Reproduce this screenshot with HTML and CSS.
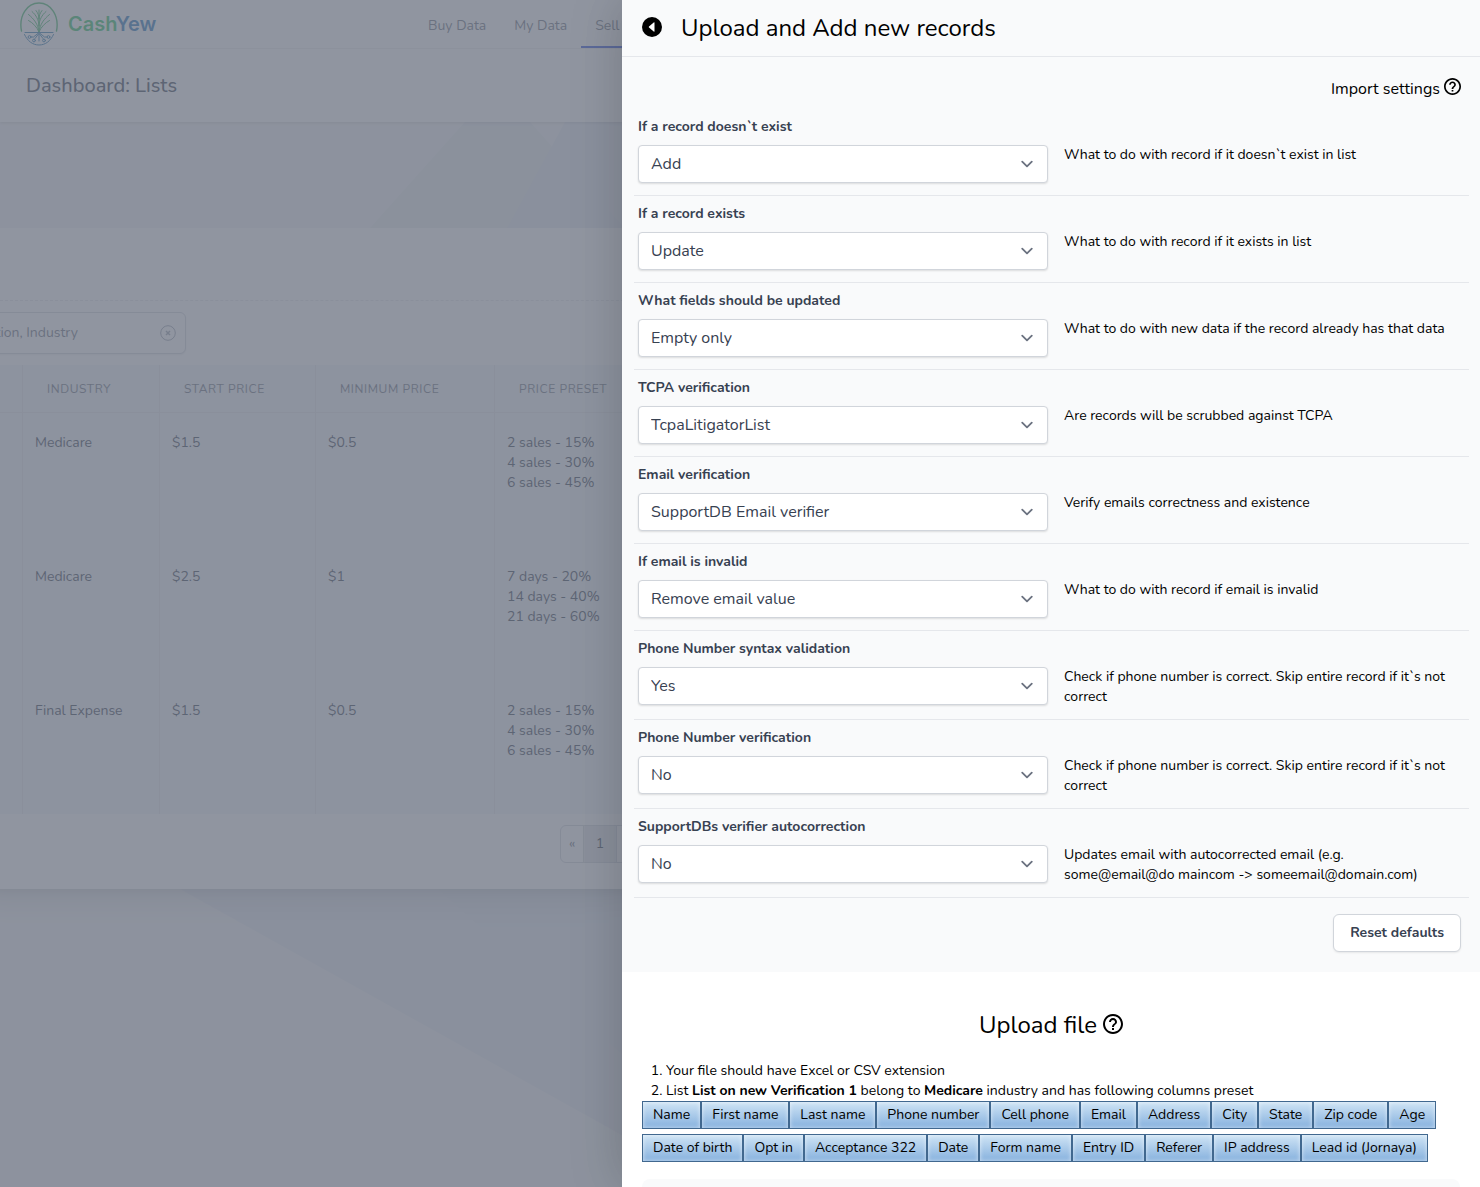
FILE: index.html
```html
<!DOCTYPE html>
<html lang="en">
<head>
<meta charset="utf-8">
<meta name="viewport" content="width=device-width, initial-scale=1">
<title>CashYew - Lists</title>
<link rel="stylesheet" href="styles.css">
</head>
<body>
<div class="page">
  <svg class="page-art" viewBox="0 0 1480 1187" preserveAspectRatio="xMinYMin slice" aria-hidden="true">
    <polygon fill="#e7edee" points="465,122 530,122 1480,1187 770,1187 72,561"/>
    <polygon fill="#e0e5f1" fill-opacity=".8" points="565,122 1480,122 1480,1187 715,1187 155,875"/>
  </svg>
  <header class="topbar">
    <a class="brand" href="#">
      <svg class="brand-mark" width="38" height="44" viewBox="0 0 38 44" fill="none" aria-hidden="true">
        <g stroke="#3fb765" stroke-linecap="round">
          <path stroke-width="1.400" d="M1.500 29C-1.500 14 7 1 19 1s20.500 13 17.500 28"/>
          <path d="M19 30V8M19 30C18 22 14 17 8.500 12.500M19 30C20 22 24 17 29.500 12.500M19 30C17 25 13 21 8.500 18.500M19 30C21 25 25 21 29.500 18.500M19 24c0-6-3-11-7-14.500M19 24c0-6 3-11 7-14.500M19 17c0-3-1-6-3-8.500M19 17c0-3 1-6 3-8.500"/>
        </g>
        <g stroke="#2c79ad" stroke-linecap="round">
          <path d="M5 30.500h28M19 31v8M18.500 31l-5 4h-3M19.500 31l5 4h3M18.500 32l-3.500 4.500M19.500 32l3.500 4.500M4.500 32.500c3 6.500 8 10.500 14.500 10.500s11.500-4 14.500-10.500"/>
          <circle cx="9.500" cy="35" r="1.400"/><circle cx="28.500" cy="35" r="1.400"/>
          <circle cx="14" cy="38.500" r="1.400"/><circle cx="24" cy="38.500" r="1.400"/>
        </g>
      </svg>
      <span class="brand-name"><span class="brand-cash">Cash</span><span class="brand-yew">Yew</span></span>
    </a>
    <nav class="nav">
      <a href="#">Buy Data</a>
      <a href="#">My Data</a>
      <a href="#" class="is-active">Sell Data</a>
    </nav>
  </header>
  <div class="heading"><h1>Dashboard: Lists</h1></div>
  <main class="card">
    <div class="card-head"></div>
    <div class="search">
      <input type="text" aria-label="Search" placeholder="Search by Name, Description, Industry">
      <button type="button" aria-label="Clear search">
        <svg width="16" height="16" viewBox="0 0 16 16" fill="none" stroke="currentColor"><circle cx="8" cy="8" r="7.300"/><path stroke-width="1.500" d="m6 6 4 4m0-4-4 4"/></svg>
      </button>
    </div>
    <table class="lists">
      <colgroup><col class="c-name"><col class="c-industry"><col class="c-start"><col class="c-min"><col></colgroup>
      <thead><tr><th></th><th>Industry</th><th>Start price</th><th>Minimum price</th><th>Price preset</th></tr></thead>
      <tbody>
        <tr><td></td><td>Medicare</td><td>$1.5</td><td>$0.5</td><td>2 sales - 15%<br>4 sales - 30%<br>6 sales - 45%</td></tr>
        <tr><td></td><td>Medicare</td><td>$2.5</td><td>$1</td><td>7 days - 20%<br>14 days - 40%<br>21 days - 60%</td></tr>
        <tr><td></td><td>Final Expense</td><td>$1.5</td><td>$0.5</td><td>2 sales - 15%<br>4 sales - 30%<br>6 sales - 45%</td></tr>
      </tbody>
    </table>
    <div class="pager"><button type="button" class="pager-prev">«</button><button type="button" class="is-current">1</button><button type="button">»</button></div>
  </main>
</div>
<div class="backdrop"></div>

<aside class="panel" role="dialog" aria-labelledby="panel-title">
  <header class="panel-head">
    <button type="button" class="back" aria-label="Back">
      <svg width="20" height="20" viewBox="0 0 20 20"><circle cx="10" cy="10" r="10"/><path fill="#fff" d="M12.500 5.800v8.400a.5.5 0 0 1-.8.400L7 10.400a.5.5 0 0 1 0-.8l4.700-4.200a.5.5 0 0 1 .8.400z"/></svg>
    </button>
    <h2 id="panel-title">Upload and Add new records</h2>
  </header>

  <section class="settings">
    <div class="settings-title"><span>Import settings</span>
      <svg class="help" width="17" height="17" viewBox="2 2 20 20"><path d="M11 18h2v-2h-2v2zm1-16C6.480 2 2 6.480 2 12s4.480 10 10 10 10-4.480 10-10S17.520 2 12 2zm0 18c-4.410 0-8-3.590-8-8s3.590-8 8-8 8 3.590 8 8-3.590 8-8 8zm0-14c-2.210 0-4 1.790-4 4h2c0-1.100.9-2 2-2s2 .9 2 2c0 2-3 1.750-3 5h2c0-2.250 3-2.500 3-5 0-2.210-1.790-4-4-4z"/></svg>
    </div>
    <div class="row"><div class="field"><label for="s1">If a record doesn`t exist</label><select id="s1"><option>Add</option></select></div><p>What to do with record if it doesn`t exist in list</p></div>
    <div class="row"><div class="field"><label for="s2">If a record exists</label><select id="s2"><option>Update</option></select></div><p>What to do with record if it exists in list</p></div>
    <div class="row"><div class="field"><label for="s3">What fields should be updated</label><select id="s3"><option>Empty only</option></select></div><p>What to do with new data if the record already has that data</p></div>
    <div class="row"><div class="field"><label for="s4">TCPA verification</label><select id="s4"><option>TcpaLitigatorList</option></select></div><p>Are records will be scrubbed against TCPA</p></div>
    <div class="row"><div class="field"><label for="s5">Email verification</label><select id="s5"><option>SupportDB Email verifier</option></select></div><p>Verify emails correctness and existence</p></div>
    <div class="row"><div class="field"><label for="s6">If email is invalid</label><select id="s6"><option>Remove email value</option></select></div><p>What to do with record if email is invalid</p></div>
    <div class="row"><div class="field"><label for="s7">Phone Number syntax validation</label><select id="s7"><option>Yes</option></select></div><p>Check if phone number is correct. Skip entire record if it`s not correct</p></div>
    <div class="row"><div class="field"><label for="s8">Phone Number verification</label><select id="s8"><option>No</option></select></div><p>Check if phone number is correct. Skip entire record if it`s not correct</p></div>
    <div class="row"><div class="field"><label for="s9">SupportDBs verifier autocorrection</label><select id="s9"><option>No</option></select></div><p>Updates email with autocorrected email (e.g. some@email@do maincom -&gt; someemail@domain.com)</p></div>
    <div class="settings-foot"><button type="button" class="btn">Reset defaults</button></div>
  </section>

  <section class="upload">
    <h2>Upload file
      <svg class="help" width="20" height="20" viewBox="2 2 20 20"><path d="M11 18h2v-2h-2v2zm1-16C6.480 2 2 6.480 2 12s4.480 10 10 10 10-4.480 10-10S17.520 2 12 2zm0 18c-4.410 0-8-3.590-8-8s3.590-8 8-8 8 3.590 8 8-3.590 8-8 8zm0-14c-2.210 0-4 1.790-4 4h2c0-1.100.9-2 2-2s2 .9 2 2c0 2-3 1.750-3 5h2c0-2.250 3-2.500 3-5 0-2.210-1.790-4-4-4z"/></svg>
    </h2>
    <ol>
      <li>Your file should have Excel or CSV extension</li>
      <li>List <b>List on new Verification 1</b> belong to <b>Medicare</b> industry and has following columns preset</li>
    </ol>
    <div class="tags">
      <span>Name</span><span>First name</span><span>Last name</span><span>Phone number</span><span>Cell phone</span><span>Email</span><span>Address</span><span>City</span><span>State</span><span>Zip code</span><span>Age</span><span>Date of birth</span><span>Opt in</span><span>Acceptance 322</span><span>Date</span><span>Form name</span><span>Entry ID</span><span>Referer</span><span>IP address</span><span>Lead id (Jornaya)</span>
    </div>
    <div class="dropzone"></div>
  </section>
</aside>
</body>
</html>
```
FILE: styles.css
```css
*, *::before, *::after { box-sizing: border-box; }
body {
  margin: 0;
  overflow: hidden;
  background: #f3f4f6;
  color: #000;
  font: 14px/20px Nunito, "Open Sans", sans-serif;
}
h1, h2, p, ol { margin: 0; font-weight: 400; }
button, input, select { font: inherit; color: inherit; margin: 0; }
a { color: inherit; text-decoration: none; }
svg { display: block; }

/* Page behind the panel */
.page { position: relative; min-height: 100vh; }
.page-art { position: absolute; inset: 0; width: 100%; height: 100%; z-index: -1; opacity: .75; }
.topbar {
  display: flex;
  height: 49px;
  padding-left: 20px;
  background: #fff;
  border-bottom: 1px solid #f3f4f6;
}
.brand { display: flex; align-items: center; gap: 10px; width: 394px; }
.brand-name { font: 600 20px/24px Inter, sans-serif; }
.brand-cash { color: #2fbf66; }
.brand-yew { color: #2774b8; }
.nav { display: flex; color: #6b7280; }
.nav a { padding: 16px 14px 0; border-bottom: 2px solid transparent; }
.nav .is-active { border-color: #2f52e0; }
.heading {
  position: relative;
  padding: 23px 26px 22px;
  background: #fff;
  box-shadow: 0 1px 3px rgba(0, 0, 0, .15);
}
.heading h1 { font-size: 20px; line-height: 28px; font-weight: 500; color: #374151; }
.card {
  margin: 106px 0 0 -24px;
  padding: 0 0 26px 24px;
  background: #fff;
  box-shadow: 0 20px 25px -5px rgba(0, 0, 0, .1), 0 8px 10px -6px rgba(0, 0, 0, .1);
}
.card-head { height: 73px; border-bottom: 1px dashed #e5e7eb; }
.search {
  position: relative;
  width: 387px;
  margin: 11px 0 11px -201px;
}
.search input {
  display: block;
  width: 100%;
  height: 42px;
  padding: 0 107px 2px 12px;
  text-align: right;
  background: #fff;
  border: 1px solid #d1d5db;
  border-radius: 6px;
  box-shadow: 0 1px 2px rgba(0, 0, 0, .08);
}
.search input::placeholder { color: #6b7280; opacity: 1; }
.search button {
  position: absolute;
  right: 10px;
  top: 13px;
  padding: 0;
  border: 0;
  background: none;
  color: #9ca3af;
}
.lists { width: 100%; table-layout: fixed; border-collapse: separate; border-spacing: 0; background: #f1f5f9; color: #374151; }
.c-name { width: 22px; }
.c-industry { width: 137px; }
.c-start { width: 156px; }
.c-min { width: 179px; }
.lists th {
  height: 47px;
  padding: 0 24px;
  font-size: 12px;
  line-height: 16px;
  font-weight: 400;
  text-align: left;
  text-transform: uppercase;
  letter-spacing: .05em;
  color: #6b7280;
}
.lists td { height: 134px; padding: 21px 12px; vertical-align: top; }
.lists tbody tr:first-child td { padding-top: 20px; border-top: 1px solid #e5e7eb; }
.lists th + th, .lists td + td { border-left: 1px solid #e5e7eb; }
.lists th:first-child, .lists td:first-child { padding: 0; }
.pager { display: flex; margin: 11px 0 0 560px; }
.pager button { height: 38px; min-width: 34px; padding: 0; border: 1px solid #d1d5db; background: #fff; color: #374151; margin-right: -1px; }
.pager .pager-prev { min-width: 24px; color: #6b7280; border-radius: 6px 0 0 6px; }
.pager .is-current { background: #e5e7eb; }
.backdrop { position: fixed; inset: 0; background: rgba(107, 114, 128, .75); }

/* Slide-over panel */
.panel {
  position: fixed;
  inset: 0 0 0 auto;
  width: 100%;
  max-width: 858px;
  overflow-y: auto;
  scrollbar-width: none;
  background: #fff;
  box-shadow: 0 0 50px rgba(0, 0, 0, .2);
}
.panel-head {
  display: flex;
  align-items: center;
  gap: 19px;
  height: 57px;
  padding: 0 20px;
  background: #f9fafb;
  border-bottom: 1px solid #e5e7eb;
}
.panel h2 { font-size: 24px; line-height: 32px; }
.back { padding: 0 0 2px; border: 0; background: none; }
.settings { padding: 0 11px 20px 12px; background: #f9fafb; }
.settings-title {
  display: flex;
  justify-content: flex-end;
  gap: 4px;
  padding: 20px 8px 8px;
  font-size: 16px;
  line-height: 24px;
}
.settings-title .help { margin-top: 1px; }
.row {
  display: grid;
  grid-template-columns: 1fr 417px;
  padding-bottom: 12px;
  border-bottom: 1px solid #e5e7eb;
}
.field { padding: 8px 4px 0; }
.field label { display: block; margin-bottom: 8px; font-weight: 700; color: #374151; }
.field select {
  appearance: none;
  display: block;
  width: 100%;
  height: 38px;
  padding: 0 40px 0 12px;
  font-size: 16px;
  line-height: 24px;
  color: #374151;
  border: 1px solid #d1d5db;
  border-radius: 4px;
  box-shadow: 0 1px 2px rgba(0, 0, 0, .12);
  background: #fff url("data:image/svg+xml,%3Csvg xmlns='http://www.w3.org/2000/svg' fill='none' viewBox='0 0 20 20'%3E%3Cpath stroke='%236b7280' stroke-linecap='round' stroke-linejoin='round' stroke-width='1.5' d='M6 8l4 4 4-4'/%3E%3C/svg%3E") no-repeat right 8px center / 24px;
}
.row p { padding: 36px 16px 0 12px; }
.settings-foot { display: flex; justify-content: flex-end; padding: 16px 8px 0; }
.btn {
  height: 38px;
  padding: 0 16px;
  font-weight: 700;
  color: #374151;
  background: #fff;
  border: 1px solid #d1d5db;
  border-radius: 6px;
  box-shadow: 0 1px 2px rgba(0, 0, 0, .08);
}
.upload { padding: 37px 20px 24px; }
.upload h2 { display: flex; justify-content: center; align-items: center; gap: 6px; }
.upload h2 .help { margin-bottom: 2px; }
.upload ol { margin-top: 20px; padding-left: 24px; }
.upload b { font-weight: 700; }
.tags { display: flex; flex-wrap: wrap; row-gap: 5px; }
.tags span {
  height: 28px;
  padding: 3px 10px;
  border: 1px solid #41688f;
  background: linear-gradient(#cfe4f5, #86b1de);
  box-shadow: inset 0 0 4px rgba(255, 255, 255, .6);
}
.dropzone { height: 200px; margin-top: 17px; border-radius: 8px; background: #f9fafb; }
```
